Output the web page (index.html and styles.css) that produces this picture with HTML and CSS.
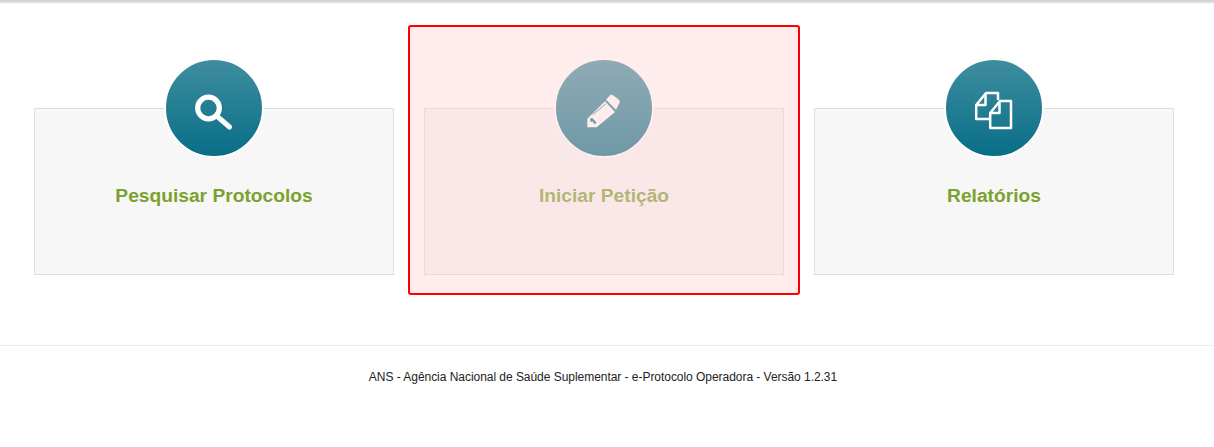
FILE: index.html
```html
<!DOCTYPE html>
<html lang="en">
<head>
    <meta charset="UTF-8">
    <title>e-Protocolo Operadora</title>
    <link rel="stylesheet" href="styles.css">
</head>
<body>
    <div class="top-shadow"></div>

    <div class="menu">
        <div class="menu-item">
            <div class="circle">
                <svg class="icon" viewBox="0 0 40 40">
                    <circle cx="14.500" cy="20" r="10.800" fill="none" stroke="#fff" stroke-width="5.200"/>
                    <path d="M24.500 29.500l11 9.500" fill="none" stroke="#fff" stroke-width="5" stroke-linecap="round"/>
                </svg>
            </div>
            <div class="card"><h2>Pesquisar Protocolos</h2></div>
        </div>

        <div class="menu-item">
            <div class="circle">
                <svg class="icon" viewBox="0 0 40 40">
                    <path d="M3.300 39.300v-8.600l17.700-17.400 10 10.700-18.300 15.300z" fill="#fff"/>
                    <path d="M22 11.700l3.500-4q1.500-1.500 3.500-.5l6 4.500q1.300 1.500 .3 3.500l-3.300 6.500z" fill="#fff"/>
                    <path d="M8.700 26.700l13.300-11" fill="none" stroke="#0b7088" stroke-width="0.800"/>
                    <path d="M6 30l3 .5 3.700 4.500-2.400 1-1.600-2.500-2 .5z" fill="#0b7088"/>
                </svg>
            </div>
            <div class="card"><h2>Iniciar Petição</h2></div>
            <div class="highlight"></div>
        </div>

        <div class="menu-item">
            <div class="circle">
                <svg class="icon" viewBox="0 0 40 40">
                    <path d="M15 31H2.200V17L12 5h12v7" fill="none" stroke="#fff" stroke-width="2.500" stroke-linejoin="round"/>
                    <path d="M11.500 5v12H2.200" fill="none" stroke="#fff" stroke-width="2.500" stroke-linejoin="round"/>
                    <path d="M16.200 40V25L26 13h11v27z" fill="none" stroke="#fff" stroke-width="2.500" stroke-linejoin="round"/>
                    <path d="M25.500 13v12h-9.300" fill="none" stroke="#fff" stroke-width="2.500" stroke-linejoin="round"/>
                </svg>
            </div>
            <div class="card"><h2>Relatórios</h2></div>
        </div>
    </div>

    <footer class="footer">ANS - Agência Nacional de Saúde Suplementar - e-Protocolo Operadora - Versão 1.2.31</footer>
</body>
</html>
```

FILE: styles.css
```css
body {
    margin: 0;
    font-family: "Liberation Sans", Arial, sans-serif;
    background-color: #fff;
    color: #222;
}
.top-shadow {
    height: 2px;
    background-color: #d4d4d4;
    box-shadow: 0 1px 2px #ddd;
}
.menu {
    display: grid;
    grid-template-columns: repeat(3, 390px);
    padding: 56px 0 0 19px;
}
.menu-item {
    position: relative;
    padding: 0 15px;
}
.circle {
    position: relative;
    display: flex;
    align-items: center;
    justify-content: center;
    box-sizing: border-box;
    width: 100px;
    height: 100px;
    margin: 0 auto -50px;
    border: 2px solid #fff;
    border-radius: 50%;
    background: linear-gradient(#3f8d9f, #086e87);
}
.icon {
    width: 40px;
    height: 40px;
    overflow: visible;
}
.card {
    box-sizing: border-box;
    height: 167px;
    padding-top: 76px;
    background-color: #f7f7f7;
    border: 1px solid #ddd;
}
.card h2 {
    margin: 0;
    font-size: 19.200px;
    line-height: 22px;
    font-weight: bold;
    text-align: center;
    color: #7ba12e;
}
/* selection box that lies over the middle item */
.highlight {
    position: absolute;
    top: -33px;
    left: -1px;
    right: -1px;
    height: 270px;
    box-sizing: border-box;
    border: 2px solid #f00;
    border-radius: 3px;
    background-color: rgba(255, 212, 212, 0.42);
}
.footer {
    margin-top: 70px;
    padding: 23px 8px 0 0;
    border-top: 1px solid #eee;
    font-size: 12px;
    line-height: 17px;
    letter-spacing: -0.04px;
    text-align: center;
}
```
